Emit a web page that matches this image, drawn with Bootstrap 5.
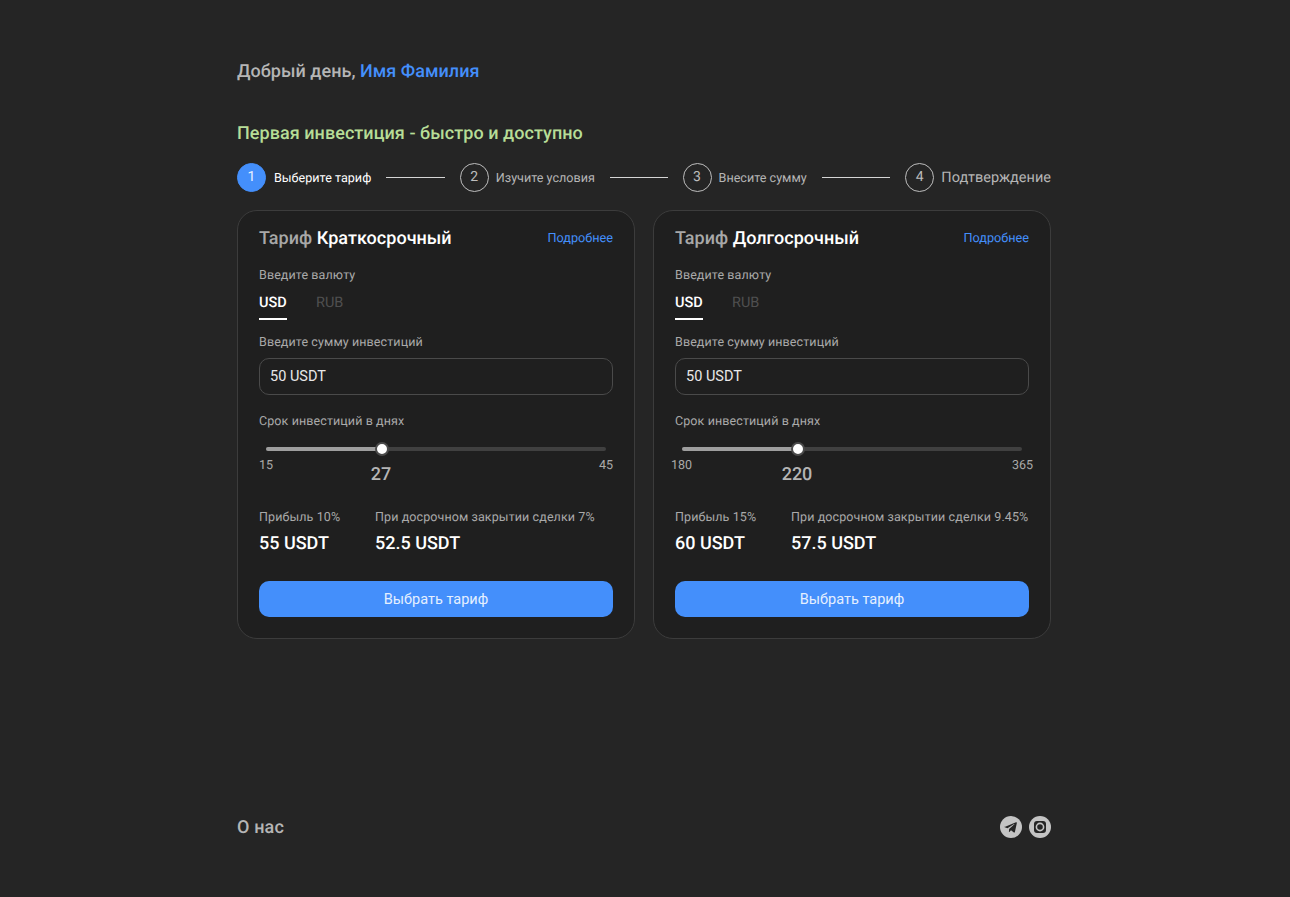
<!DOCTYPE html>
<html lang="ru">
<head>
<meta charset="utf-8">
<title>Инвестиции</title>
<link href="https://cdn.jsdelivr.net/npm/bootstrap@5.3.0/dist/css/bootstrap.min.css" rel="stylesheet">
<style>
body{background:#252525;font-family:Roboto,"Liberation Sans",sans-serif;color:#bdbdbd;min-height:897px;text-rendering:geometricPrecision}
.page-wrap{width:814px;margin-left:237px;height:897px;padding-top:61px;display:flex;flex-direction:column}
.greet{font-size:18px;font-weight:500;line-height:22px;color:#b5b5b5;margin:0;letter-spacing:.04px}
.accent{color:#448ffb}
.lead-title{font-size:18px;font-weight:500;line-height:22px;color:#b7dd97;margin:40px 0 18px;letter-spacing:.05px}
.step-item{flex:1 1 0;min-width:0}
.step-circle{width:29px;height:29px;border:1px solid #bdbdbd;border-radius:50%;font-size:14px;display:flex;align-items:center;justify-content:center;flex:none;color:#bdbdbd}
.step-circle.on{background:#448ffb;border-color:#448ffb;color:#e8f1ff}
.step-text{font-size:12.6px;margin:3px 0 0 7px;white-space:nowrap;color:#b5b5b5}
.step-text.on{color:#fff;margin-left:8px}
.step-text.big{font-size:14.5px;margin-top:0}
.step-line{height:1px;background:#d5d5d5;flex:1;margin:0 15px}
.plans{gap:18px;margin-top:18px}
.plan{flex:1 1 0;background:#1f1f1f;border:1px solid #3c3c3c;border-radius:20px;padding:16px 21px 20px;height:429px;color:#bdbdbd}
.plan-name{font-size:18px;font-weight:500;line-height:24px;color:#a8a8a8;margin:0;letter-spacing:.03px}
.plan-name b{font-weight:500;color:#fff}
.more{font-size:12.7px;color:#448ffb;text-decoration:none}
.lbl{font-size:12.5px;line-height:16px;color:#aaa;letter-spacing:.1px;margin:0;white-space:nowrap}
.lbl-cur{margin-top:17px}
.lbl-amount{margin-top:15px}
.lbl-term{margin-top:19px}
.cur{gap:29px;margin-top:9px}
.cur-item{font-size:14.5px;line-height:20px;padding:0 0 5px;color:#4f4f4f;border-bottom:2px solid transparent;width:28px}
.cur-item.on{color:#fff;font-weight:500;border-color:#fff}
.amount.form-control{background:#1f1f1f;border:1px solid #4a4a4a;border-radius:10px;color:#e8e8e8;font-size:14.5px;height:37px;padding:0 10px;margin-top:7px;font-family:inherit}
.track{height:4px;background:#404040;border-radius:2px;margin:17px 7px 0;position:relative}
.fill{height:4px;background:#9e9e9e;border-radius:2px}
.knob{position:absolute;top:-5px;width:14px;height:14px;margin-left:-7px;border-radius:50%;background:#fff;border:2px solid #4a4a4a}
.ends{font-size:12.5px;line-height:16px;color:#aaa;margin-top:7px}
.val{font-size:18px;font-weight:500;line-height:22px;color:#b5b5b5;position:absolute;top:6px;transform:translateX(-50%)}
.ends-box{position:relative;height:52px}
.profit-col1{width:116px;flex:none}
.sum{font-size:18px;font-weight:500;line-height:22px;color:#fff;margin-top:7px}
.go.btn{background:#448ffb;border:0;border-radius:10px;height:36px;font-size:14.5px;color:#e4efff;margin-top:26px;width:100%;font-family:inherit;padding:1px 0 0}
.foot{margin-top:auto;margin-bottom:59px}
.about{font-size:18px;font-weight:500;color:#b5b5b5;text-decoration:none;line-height:22px;letter-spacing:.15px;padding-top:1px;margin-bottom:-1px}
</style>
</head>
<body>
<div class="page-wrap">
  <p class="greet">Добрый день, <span class="accent">Имя Фамилия</span></p>
  <p class="lead-title">Первая инвестиция - быстро и доступно</p>

  <div class="d-flex align-items-center">
    <div class="d-flex align-items-center step-item"><span class="step-circle on">1</span><span class="step-text on">Выберите тариф</span><span class="step-line"></span></div>
    <div class="d-flex align-items-center step-item"><span class="step-circle">2</span><span class="step-text">Изучите условия</span><span class="step-line"></span></div>
    <div class="d-flex align-items-center step-item"><span class="step-circle">3</span><span class="step-text">Внесите сумму</span><span class="step-line"></span></div>
    <div class="d-flex align-items-center flex-none"><span class="step-circle">4</span><span class="step-text big">Подтверждение</span></div>
  </div>

  <div class="d-flex plans">
    <div class="plan">
      <div class="d-flex justify-content-between align-items-center">
        <h2 class="plan-name">Тариф <b>Краткосрочный</b></h2><a class="more" href="#">Подробнее</a>
      </div>
      <p class="lbl lbl-cur">Введите валюту</p>
      <div class="d-flex cur"><span class="cur-item on">USD</span><span class="cur-item">RUB</span></div>
      <p class="lbl lbl-amount">Введите сумму инвестиций</p>
      <input class="form-control amount" value="50 USDT">
      <p class="lbl lbl-term">Срок инвестиций в днях</p>
      <div class="track"><div class="fill" style="width:34%"></div><span class="knob" style="left:34%"></span></div>
      <div class="ends-box">
        <div class="d-flex justify-content-between ends"><span>15</span><span>45</span></div>
        <span class="val" style="left:122px">27</span>
      </div>
      <div class="d-flex">
        <div class="profit-col1"><p class="lbl">Прибыль 10%</p><div class="sum">55 USDT</div></div>
        <div><p class="lbl">При досрочном закрытии сделки 7%</p><div class="sum">52.5 USDT</div></div>
      </div>
      <button class="btn go" type="button">Выбрать тариф</button>
    </div>

    <div class="plan">
      <div class="d-flex justify-content-between align-items-center">
        <h2 class="plan-name">Тариф <b>Долгосрочный</b></h2><a class="more" href="#">Подробнее</a>
      </div>
      <p class="lbl lbl-cur">Введите валюту</p>
      <div class="d-flex cur"><span class="cur-item on">USD</span><span class="cur-item">RUB</span></div>
      <p class="lbl lbl-amount">Введите сумму инвестиций</p>
      <input class="form-control amount" value="50 USDT">
      <p class="lbl lbl-term">Срок инвестиций в днях</p>
      <div class="track"><div class="fill" style="width:34%"></div><span class="knob" style="left:34%"></span></div>
      <div class="ends-box">
        <div class="d-flex justify-content-between ends"><span style="margin-left:-4px">180</span><span style="margin-right:-4px">365</span></div>
        <span class="val" style="left:122px">220</span>
      </div>
      <div class="d-flex">
        <div class="profit-col1"><p class="lbl">Прибыль 15%</p><div class="sum">60 USDT</div></div>
        <div><p class="lbl">При досрочном закрытии сделки 9.45%</p><div class="sum">57.5 USDT</div></div>
      </div>
      <button class="btn go" type="button">Выбрать тариф</button>
    </div>
  </div>

  <div class="d-flex justify-content-between align-items-center foot">
    <a class="about" href="#">О нас</a>
    <div class="d-flex" style="gap:7px">
      <svg width="22" height="22" viewBox="0 0 22 22" role="img" aria-label="Telegram"><circle cx="11" cy="11" r="11" fill="#c4c4c4"/><path d="M4.6 10.9 16 6.3c.5-.2 1 .1.8.9l-1.9 8.7c-.1.6-.5.8-1 .5l-2.9-2.1-1.4 1.4c-.2.2-.4.3-.7.3l.2-3 5.3-4.8c.2-.2 0-.3-.3-.1l-6.6 4.1-2.7-.9c-.6-.1-.6-.6.2-.7z" fill="#252525"/></svg>
      <svg width="22" height="22" viewBox="0 0 22 22" role="img" aria-label="Instagram"><circle cx="11" cy="11" r="11" fill="#c4c4c4"/><rect x="5" y="5" width="12" height="12" rx="3" fill="#252525"/><circle cx="11" cy="11" r="3.6" fill="none" stroke="#c4c4c4" stroke-width="1.6"/></svg>
    </div>
  </div>
</div>
<script src="https://cdn.jsdelivr.net/npm/bootstrap@5.3.0/dist/js/bootstrap.bundle.min.js"></script>
</body>
</html>
